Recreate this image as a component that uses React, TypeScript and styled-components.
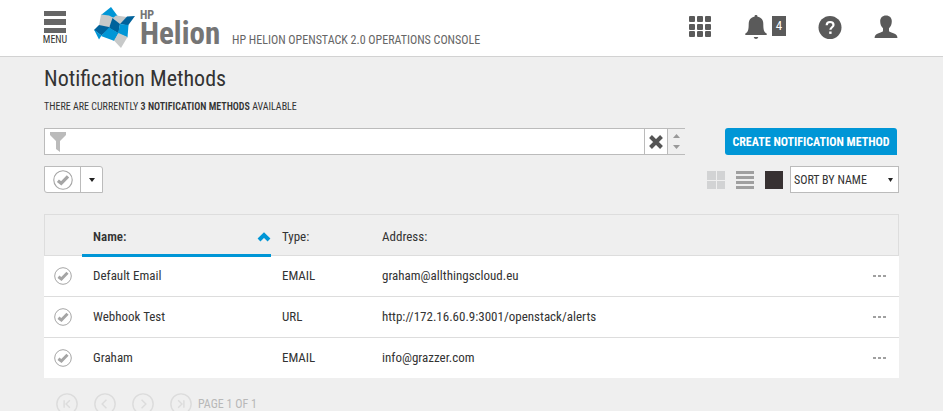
import React from "react";
import styled, { createGlobalStyle, css } from "styled-components";

const font = `"Roboto Condensed", Roboto, "Liberation Sans", sans-serif`;

const GlobalStyle = createGlobalStyle`
  * { box-sizing: border-box; }
  html, body { margin: 0; background: #efefef; }
  body { font-family: ${font}; font-size: 13px; line-height: 16px; color: #333; }
  html { scrollbar-width: none; }
  button, input, select { font: inherit; color: inherit; margin: 0; }
  button { padding: 0; border: 0; background: none; cursor: pointer; }
  svg { display: block; }
`;

const Header = styled.header`
  display: flex;
  align-items: flex-start;
  height: 57px;
  padding: 0 45px 0 43px;
  background: #fff;
  border-bottom: 1px solid #d2d2d2;
`;

const MenuButton = styled.button`
  display: flex;
  flex-direction: column;
  align-items: center;
  width: 24px;
  padding-top: 11px;
  font-size: 10px;
  line-height: 14px;
`;

const Brand = styled.a`
  display: flex;
  margin-left: 27px;
  padding-top: 7px;
  color: #757575;
  text-decoration: none;
`;

const BrandWords = styled.span`
  display: flex;
  flex-direction: column;
  width: 80px;
  margin-left: 5px;
  font-weight: 700;
`;

const BrandSmall = styled.span`
  font-size: 12px;
  line-height: 16px;
`;

const BrandLarge = styled.span`
  font-size: 31px;
  line-height: 22px;
`;

const ProductName = styled.span`
  margin: 32px auto 0 12px;
  color: #666;
  font-size: 12px;
  white-space: nowrap;
`;

const HeaderTools = styled.nav`
  display: flex;
  align-items: flex-start;
  gap: 32px;
  padding-top: 15px;
`;

const ToolButton = styled.button`
  display: flex;
  align-items: flex-start;
  gap: 5px;
`;

const Count = styled.span`
  width: 14px;
  height: 20px;
  margin-top: 1px;
  background: #5a5a5a;
  color: #fff;
  line-height: 20px;
  text-align: center;
`;

const Main = styled.main`
  padding: 10px 44px 0;
`;

const Title = styled.h1`
  margin: 0;
  font-size: 22px;
  line-height: 24px;
  font-weight: 400;
`;

const Summary = styled.p`
  margin: 8px 0 13px;
  font-size: 10px;
  strong { font-weight: 600; }
`;

const Bar = styled.div`
  display: flex;
  align-items: center;
`;

const Filter = styled.label`
  display: flex;
  flex: 1;
  height: 27px;
  border: 1px solid #bbb;
  border-right: 0;
`;

const FilterIcon = styled.span`
  padding: 2px 0 0 4px;
  background: #fff;
`;

const FilterInput = styled.input`
  flex: 1;
  min-width: 0;
  padding: 0 6px;
  border: 0;
  border-radius: 0;
  background: #fff;
  outline: 0;
`;

const ClearButton = styled.button`
  display: grid;
  place-items: center;
  width: 24px;
  border: solid #bbb;
  border-width: 0 1px;
  background: #fff;
`;

const Stepper = styled.span`
  display: flex;
  flex-direction: column;
  justify-content: space-evenly;
  align-items: center;
  width: 17px;
`;

const StepButton = styled.button`
  padding: 2px 4px;
`;

const CreateButton = styled.button`
  width: 172px;
  height: 27px;
  margin: 0 2px 0 40px;
  border-radius: 3px 3px 0 3px;
  background: #0096d6;
  color: #fff;
  font-size: 12px;
  font-weight: 700;
  white-space: nowrap;
`;

const Controls = styled(Bar)`
  margin: 11px 0 21px;
`;

const SplitButton = styled.div`
  display: flex;
  height: 27px;
  margin-right: auto;
  border: 1px solid #bbb;
  border-radius: 0 3px 0 3px;
  background: #fff;
`;

const SplitPart = styled.button<{ $narrow?: boolean }>`
  display: grid;
  place-items: center;
  width: ${(p) => (p.$narrow ? 22 : 35)}px;
  ${(p) => p.$narrow && css`border-left: 1px solid #bbb;`}
`;

const ViewButtons = styled.div`
  display: flex;
  gap: 11px;
  margin-right: 7px;
`;

const SortBox = styled.div`
  display: grid;
  align-items: center;
  width: 109px;
  height: 27px;
  border: 1px solid #bbb;
  background: #fff;
  > * { grid-area: 1 / 1; }
  > svg { justify-self: end; margin-right: 5px; pointer-events: none; }
`;

const SortSelect = styled.select`
  width: 100%;
  height: 25px;
  padding: 0 14px 0 3px;
  border: 0;
  background: none;
  font-size: 12px;
  appearance: none;
`;

const Table = styled.table`
  width: 100%;
  table-layout: fixed;
  border-spacing: 0;
  text-align: left;
`;

const HeadCell = styled.th<{ $width?: string; $sorted?: boolean }>`
  position: relative;
  width: ${(p) => p.$width ?? "auto"};
  height: 42px;
  padding: 3px 0 0 11px;
  border: solid #ddd;
  border-width: 1px 0;
  font-weight: 400;
  &:first-child { border-left-width: 1px; }
  &:last-child { border-right-width: 1px; }
  ${(p) =>
    p.$sorted &&
    css`
      &::after {
        content: "";
        position: absolute;
        left: 0;
        right: 0;
        bottom: -2px;
        height: 3px;
        background: #0096d6;
      }
    `}
`;

const SortButton = styled.button`
  display: flex;
  justify-content: space-between;
  align-items: center;
  width: 100%;
  font-weight: 600;
`;

const Row = styled.tr`
  &:not(:last-child) td { border-bottom: 1px solid #ddd; }
  &:last-child td { height: 40px; }
`;

const Cell = styled.td<{ $action?: boolean }>`
  height: 41px;
  padding: 0 12px 0 11px;
  background: #fff;
  text-align: ${(p) => (p.$action ? "right" : "left")};
  &:first-child { padding-left: 10px; }
`;

const IconButton = styled.button`
  display: inline-block;
  vertical-align: middle;
`;

const Pager = styled.nav`
  display: flex;
  align-items: center;
  gap: 16px;
  padding: 15px 12px 12px;
  color: #b8b8b8;
`;

const PageText = styled.span`
  margin-left: -10px;
  font-size: 12px;
`;

const CheckIcon = ({ size = 18 }: { size?: number }) => (
  <svg width={size} height={size} viewBox="0 0 18 18" fill="none">
    <circle cx="9" cy="9" r="8.3" stroke="#a5a5a5" />
    <path d="M4.4 9.700 7.400 12 13.500 5.800" stroke="#a5a5a5" strokeWidth="3" />
  </svg>
);

const Triangle = ({ up, size = 7, color = "#999" }: { up?: boolean; size?: number; color?: string }) => (
  <svg width={size} height="4" viewBox="0 0 8 4" preserveAspectRatio="none" fill={color}>
    <path d={up ? "M0 4 4 0 8 4Z" : "M0 0H8L4 4Z"} />
  </svg>
);

const Logo = () => (
  <svg width="41" height="41" viewBox="0 0 41 41">
    <path fill="#0096d6" d="M17 0 24 9.500 19 11 7 8Z" />
    <path fill="#c7c9c9" d="M7 7.500 15 8.500 20 11 15 20.500 5 18.500Z" />
    <path fill="#c7c9c9" d="M19 11 22 8.500 33 10 26 17.500Z" />
    <path fill="#00629b" d="M18.500 11 26 17 24.500 26.500 15 21Z" />
    <path fill="#00629b" d="M41 9 33 9.500 26 17 34 18.500Z" />
    <path fill="#0096d6" d="M26 17 34.500 18 33.500 30.500 24 26.500Z" />
    <path fill="#00629b" d="M5 18 15 20 15 22 7.500 28.500 0 23Z" />
    <path fill="#0096d6" d="M15 20.500 24.500 26 20.500 34 7 29Z" />
    <path fill="#0096d6" d="M0 22.500 7.500 28.500 5 32.500Z" />
    <path fill="#c7c9c9" d="M24.500 26 33.500 30 27 41 20 33.500Z" />
  </svg>
);

const pagerSteps = [
  ["First page", "M8.5 7.5v8M14.5 7.5l-4 4 4 4"],
  ["Previous page", "M13 7l-4.5 4.5 4.5 4.5"],
  ["Next page", "M10 7l4.500 4.500-4.500 4.500"],
  ["Last page", "M8.5 7.5l4 4-4 4M14.5 7.5v8"],
];

const methods = [
  { name: "Default Email", type: "EMAIL", address: "graham@allthingscloud.eu" },
  { name: "Webhook Test", type: "URL", address: "http://172.16.60.9:3001/openstack/alerts" },
  { name: "Graham", type: "EMAIL", address: "info@grazzer.com" },
];

export default function App() {
  return (
    <>
      <GlobalStyle />
      <Header>
        <MenuButton>
          <svg width="22" height="22" fill="#666"><path d="M0 0h22v5H0zM0 8h22v6H0zM0 17h22v5H0z" /></svg>
          MENU
        </MenuButton>
        <Brand href="#">
          <Logo />
          <BrandWords>
            <BrandSmall>HP</BrandSmall>
            <BrandLarge>Helion</BrandLarge>
          </BrandWords>
        </Brand>
        <ProductName>HP HELION OPENSTACK 2.0 OPERATIONS CONSOLE</ProductName>
        <HeaderTools>
          <ToolButton aria-label="Applications">
            <svg width="24" height="24" fill="#5a5a5a">
              {[1, 9, 16].map((y) => [0, 8, 16].map((x) => <rect key={`${x}-${y}`} x={x} y={y} width="6" height="6" rx="1" />))}
            </svg>
          </ToolButton>
          <ToolButton aria-label="Notifications, 4 new">
            <svg width="22" height="24" viewBox="0 0 22 24" fill="#5a5a5a">
              <path d="M11 0c1 0 1.600.6 1.300 1.500 4 .8 6 3.600 6 7.500 0 6 .7 8 3.400 9.500V20H.3v-1.500C3 17 3.700 15 3.700 9c0-3.900 2-6.700 6-7.500C9.400.6 10 0 11 0ZM8.700 22h4.600c-.4 1.300-1.200 2-2.300 2s-1.900-.7-2.300-2Z" />
            </svg>
            <Count>4</Count>
          </ToolButton>
          <ToolButton aria-label="Help">
            <svg width="24" height="24" viewBox="0 0 24 24">
              <circle cx="12" cy="12.500" r="11.500" fill="#5a5a5a" />
              <path d="M8.700 10.200C8.700 8 10 7 12.100 7s3.400 1.100 3.400 2.900c0 2.300-3.100 2.400-3.100 4.900" fill="none" stroke="#fff" strokeWidth="2.200" />
              <path d="M11.200 16.500h2.400v2.400h-2.400z" fill="#fff" />
            </svg>
          </ToolButton>
          <ToolButton aria-label="Account">
            <svg width="24" height="24" viewBox="0 0 24 24" fill="#5a5a5a">
              <path d="M12 .5c3.600 0 5.800 2.300 5.800 5.800 0 3-.9 5.300-2.800 6.900v2.300c0 1 .7 1.500 2.400 2 4 1.200 6 2.300 6 5.500H.6c0-3.200 2-4.300 6-5.500 1.700-.5 2.400-1 2.400-2v-2.300C7.100 11.600 6.200 9.300 6.200 6.300 6.200 2.800 8.400.5 12 .5Z" />
            </svg>
          </ToolButton>
        </HeaderTools>
      </Header>
      <Main>
        <Title>Notification Methods</Title>
        <Summary>THERE ARE CURRENTLY <strong>3 NOTIFICATION METHODS</strong> AVAILABLE</Summary>
        <Bar>
          <Filter>
            <FilterIcon>
              <svg width="18" height="21" fill="#bbb"><path d="M1 1h16v3l-6 6v11l-4-3V10L1 4Z" /></svg>
            </FilterIcon>
            <FilterInput aria-label="Filter notification methods" />
            <ClearButton aria-label="Clear filter">
              <svg width="14" height="14" stroke="#555" strokeWidth="4"><path d="M1.500 1.500l11 11M12.500 1.500l-11 11" /></svg>
            </ClearButton>
            <Stepper>
              <StepButton aria-label="Previous match"><Triangle up /></StepButton>
              <StepButton aria-label="Next match"><Triangle /></StepButton>
            </Stepper>
          </Filter>
          <CreateButton>CREATE NOTIFICATION METHOD</CreateButton>
        </Bar>
        <Controls>
          <SplitButton>
            <SplitPart aria-label="Select all"><CheckIcon size={20} /></SplitPart>
            <SplitPart $narrow aria-label="Selection options"><Triangle size={6} color="#222" /></SplitPart>
          </SplitButton>
          <ViewButtons>
            <button aria-label="Tile view">
              <svg width="18" height="18" fill="#d2d3d4"><path d="M0 0h9v9H0zM10 0h8v9h-8zM0 10h9v8H0zM10 10h8v8h-8z" /></svg>
            </button>
            <button aria-label="List view">
              <svg width="18" height="18" fill="#a0a0a0"><path d="M0 0h18v3H0zM0 5h18v3H0zM0 10h18v3H0zM0 15h18v3H0z" /></svg>
            </button>
            <button aria-label="Table view">
              <svg width="18" height="18" fill="#373132"><path d="M0 0h18v18H0z" /></svg>
            </button>
          </ViewButtons>
          <SortBox>
            <SortSelect aria-label="Sort order"><option>SORT BY NAME</option></SortSelect>
            <Triangle size={5} color="#222" />
          </SortBox>
        </Controls>
        <Table>
          <thead>
            <tr>
              <HeadCell $width="38px" aria-label="Selected" />
              <HeadCell $width="22.1%" $sorted aria-sort="ascending">
                <SortButton>
                  Name:
                  <svg width="14" height="10" fill="none" stroke="#0096d6" strokeWidth="4"><path d="M2 8l5-5 5 5" /></svg>
                </SortButton>
              </HeadCell>
              <HeadCell $width="11.7%">Type:</HeadCell>
              <HeadCell>Address:</HeadCell>
              <HeadCell $width="60px" aria-label="Actions" />
            </tr>
          </thead>
          <tbody>
            {methods.map((m) => (
              <Row key={m.name}>
                <Cell><IconButton aria-label={`Select ${m.name}`}><CheckIcon /></IconButton></Cell>
                <Cell>{m.name}</Cell>
                <Cell>{m.type}</Cell>
                <Cell>{m.address}</Cell>
                <Cell $action>
                  <IconButton aria-label={`Actions for ${m.name}`}>
                    <svg width="15" height="6" fill="#a0a0a0"><path d="M1 1h3v2H1zM6 1h3v2H6zM11 1h3v2h-3z" /></svg>
                  </IconButton>
                </Cell>
              </Row>
            ))}
          </tbody>
        </Table>
        <Pager>
          {pagerSteps.map(([label, d]) => (
            <button key={label} aria-label={label} disabled>
              <svg width="22" height="22" viewBox="0 0 23 23" fill="none" stroke="#dcdcdc" strokeWidth="1.500">
                <circle cx="11.500" cy="11.500" r="10.600" />
                <path d={d} />
              </svg>
            </button>
          ))}
          <PageText>PAGE 1 OF 1</PageText>
        </Pager>
      </Main>
    </>
  );
}
